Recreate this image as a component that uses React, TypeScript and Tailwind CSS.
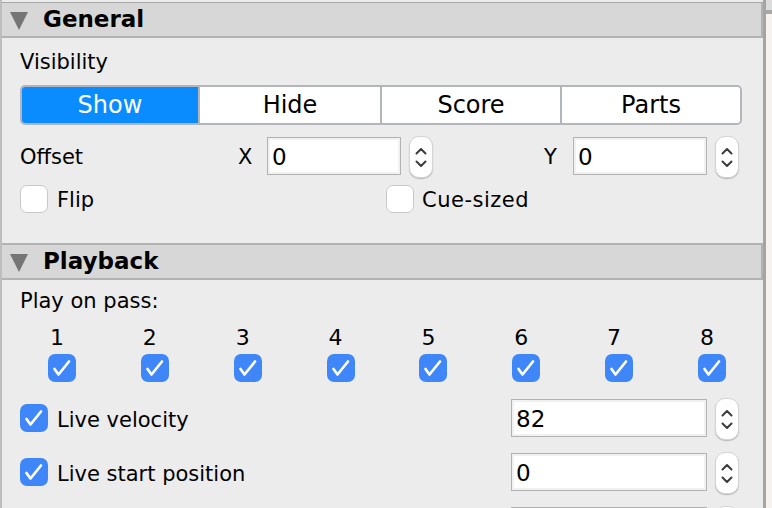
import type { ReactNode } from 'react';

const font = "font-['DejaVu_Sans',sans-serif]";

function SectionHeader({ title }: { title: string }): ReactNode {
  return (
    <div className="flex h-[35px] items-center border-r-2 border-b-2 border-[#b2b2b2] bg-[#d7d7d7]">
      <svg width="18" height="18" viewBox="0 0 18 18" className="ml-[8px] mt-[2px] shrink-0">
        <path d="M0 0H18L9 18Z" fill="#757575" />
      </svg>
      <span className="ml-[15px] text-[23px] font-bold leading-none text-black">{title}</span>
    </div>
  );
}

function CheckBox({ checked = false }: { checked?: boolean }): ReactNode {
  return (
    <span
      className={`flex h-[28px] w-[28px] shrink-0 items-center justify-center rounded-[7px] ${
        checked ? 'bg-[#3f87f8]' : 'border border-[#c8c8c8] bg-white'
      }`}
    >
      {checked && (
        <svg width="20" height="20" viewBox="0 0 20 20" fill="none">
          <path d="M2.5 11L6.5 16.5L17 3.5" stroke="white" strokeWidth="2.7" strokeLinecap="round" strokeLinejoin="round" />
        </svg>
      )}
    </span>
  );
}

function Spinner(): ReactNode {
  return (
    <span className="flex h-[42px] w-[24px] shrink-0 flex-col items-center justify-center gap-[5px] rounded-[10px] border border-[#d4d4d4] bg-white shadow-[0_1px_1px_#b8b8b8]">
      <svg width="12" height="8" viewBox="0 0 12 8" fill="none">
        <path d="M1.5 6.5L6 2L10.5 6.5" stroke="#3c3c3c" strokeWidth="2" strokeLinecap="round" strokeLinejoin="round" />
      </svg>
      <svg width="12" height="8" viewBox="0 0 12 8" fill="none">
        <path d="M1.5 1.5L6 6L10.5 1.5" stroke="#3c3c3c" strokeWidth="2" strokeLinecap="round" strokeLinejoin="round" />
      </svg>
    </span>
  );
}

function NumberField({ value, width }: { value: string; width: string }): ReactNode {
  return (
    <div className="flex items-center gap-[8px]">
      <input
        readOnly
        value={value}
        className={`mb-[2px] h-[38px] ${width} border border-[#b2b2b2] bg-white pl-[4px] pt-[2px] text-[23px] text-black shadow-[inset_0_0_0_2px_#f1f1f1] outline-none`}
      />
      <Spinner />
    </div>
  );
}

function Segment({ label, width, active = false }: { label: string; width: string; active?: boolean }): ReactNode {
  return (
    <div
      className={`flex h-full items-center justify-center border-r-2 border-[#b2b6ba] text-[24px] last:border-r-0 ${width} ${
        active ? 'bg-[#0a8cff] text-white' : 'bg-white text-black'
      }`}
    >
      {label}
    </div>
  );
}

const passes = ['1', '2', '3', '4', '5', '6', '7', '8'];

export default function App(): ReactNode {
  return (
    <div className={`flex h-[508px] w-[772px] overflow-hidden bg-[#ececec] text-[21px] text-black ${font}`}>
      <div className="w-[766px] shrink-0 border-r-[3px] border-l-2 border-r-[#a4a4a4] border-l-[#bdbdbd] pt-[2px]">
        <div className="h-[1px] bg-[#a8a8a8]" />
        <SectionHeader title="General" />

        <div className="h-[205px] pl-[18px] pr-[20px]">
          <div className="pt-[11px] leading-[27px]">Visibility</div>
          <div className="mt-[9px] flex h-[40px] w-[722px] overflow-hidden rounded-[5px] border-2 border-[#b2b6ba]">
            <Segment label="Show" width="w-[178px]" active />
            <Segment label="Hide" width="w-[182px]" />
            <Segment label="Score" width="w-[180px]" />
            <Segment label="Parts" width="w-[178px]" />
          </div>

          <div className="mt-[11px] flex h-[42px] items-center">
            <span className="w-[218px] pt-[2px]">Offset</span>
            <span className="w-[29px] pt-[2px]">X</span>
            <NumberField value="0" width="w-[134px]" />
            <span className="ml-[111px] w-[29px] pt-[2px]">Y</span>
            <NumberField value="0" width="w-[134px]" />
          </div>

          <div className="mt-[7px] flex h-[28px] items-center">
            <CheckBox />
            <span className="ml-[9px] w-[329px] pt-[4px]">Flip</span>
            <CheckBox />
            <span className="ml-[8px] pt-[4px] tracking-[0.5px]">Cue-sized</span>
          </div>
        </div>

        <div className="h-[2px] bg-[#b2b2b2]" />
        <SectionHeader title="Playback" />

        <div className="pl-[18px] pr-[20px]">
          <div className="pt-[8px] leading-[27px]">Play on pass:</div>
          <div className="mt-[11px] flex w-[706px] justify-between pl-[28px]">
            {passes.map((p) => (
              <div key={p} className="flex w-[28px] flex-col">
                <span className="w-[18px] text-center text-[22px] leading-[24px]">{p}</span>
                <span className="mt-[4px]">
                  <CheckBox checked />
                </span>
              </div>
            ))}
          </div>

          <div className="mt-[16px] flex h-[42px] items-center">
            <span className="mb-[2px]">
              <CheckBox checked />
            </span>
            <span className="ml-[9px] w-[454px] pt-[3px]">Live velocity</span>
            <NumberField value="82" width="w-[196px]" />
          </div>
          <div className="mt-[12px] flex h-[42px] items-center">
            <span className="mb-[2px]">
              <CheckBox checked />
            </span>
            <span className="ml-[9px] w-[454px] pt-[3px]">Live start position</span>
            <NumberField value="0" width="w-[196px]" />
          </div>
          <div className="mt-[12px] flex h-[42px] items-center">
            <span className="ml-[491px]">
              <NumberField value="" width="w-[196px]" />
            </span>
          </div>
        </div>
      </div>

      <div className="flex-1">
        <div className="h-[10px] bg-[#dcdcdc]" />
        <div className="h-[4px] bg-[#a8a8a8]" />
        <div className="h-full bg-[#f5f2ef]" />
      </div>
    </div>
  );
}
